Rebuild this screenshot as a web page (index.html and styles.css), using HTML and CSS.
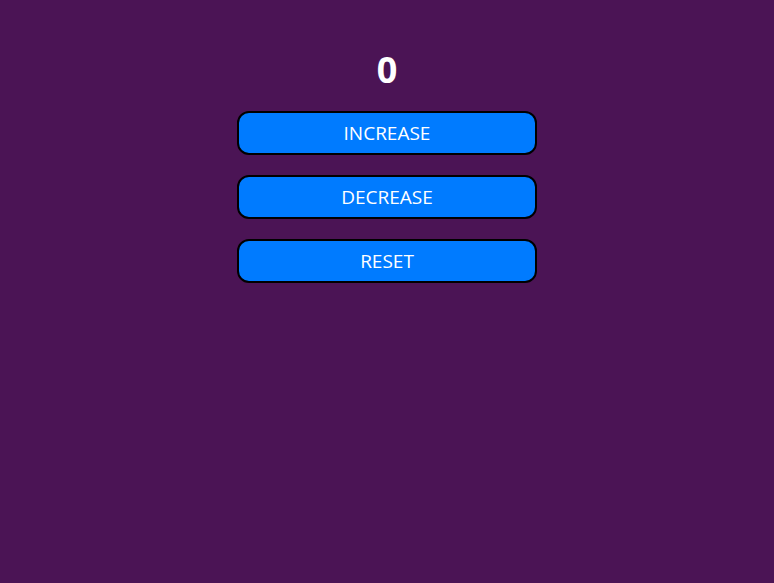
FILE: index.html
```html
<!DOCTYPE html>
<html>
<head>
<meta charset="utf-8">
<link rel="stylesheet" href="styles.css">
</head>
<body>
<main class="counter">
  <h1 class="count">0</h1>
  <button class="btn">INCREASE</button>
  <button class="btn">DECREASE</button>
  <button class="btn">RESET</button>
</main>
</body>
</html>
```
FILE: styles.css
```css
html, body {
  margin: 0;
  height: 100%;
}
body {
  background: #4b1455;
  font-family: "Open Sans", "Noto Sans", sans-serif;
  color: #fff;
}
.counter {
  display: flex;
  flex-direction: column;
  align-items: center;
  padding-top: 47px;
}
.count {
  margin: 0 0 18px;
  font-size: 36px;
  font-weight: 700;
  line-height: 46px;
}
.btn {
  width: 300px;
  height: 44px;
  margin-bottom: 20px;
  background: #007bff;
  color: #fff;
  border: 2px solid #000;
  border-radius: 12px;
  font-family: inherit;
  font-size: 19px;
}
```
